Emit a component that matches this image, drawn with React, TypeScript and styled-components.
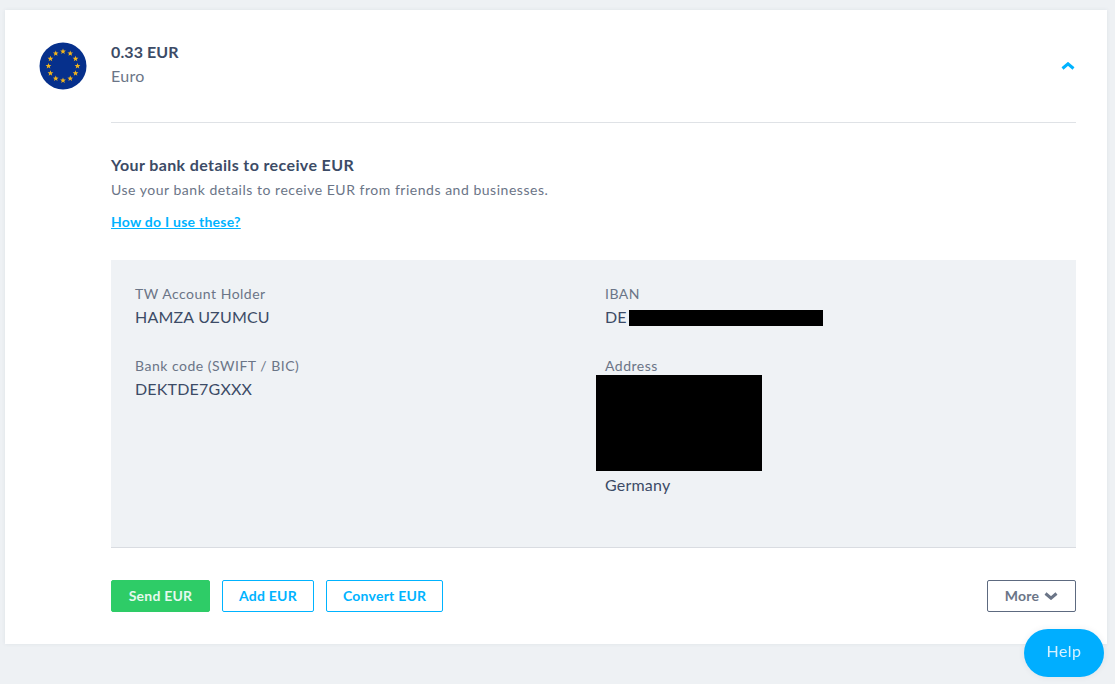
import React from 'react'
import styled, { createGlobalStyle } from 'styled-components'

const GlobalStyle = createGlobalStyle`
  html, body {
    margin: 0;
    height: 100%;
    background: #eef1f4;
    font-family: 'Lato', 'Noto Sans', sans-serif;
    overflow: hidden;
  }
`

const Page = styled.div`
  padding: 10px 8px 0 5px;
`

const Card = styled.section`
  height: 634px;
  box-sizing: border-box;
  background: #fff;
  padding: 32px 31px 0 34px;
  display: grid;
  grid-template-columns: 48px 1fr;
  column-gap: 24px;
  box-shadow: 0 0 4px rgba(40, 60, 90, 0.08);
`

const Body = styled.div`
  display: flex;
  flex-direction: column;
  min-width: 0;
`

const Header = styled.header`
  height: 80px;
  border-bottom: 1px solid #dfe2e6;
  display: flex;
  justify-content: space-between;
  align-items: flex-start;
`

const Balance = styled.div`
  display: flex;
  flex-direction: column;
  gap: 5px;
`

const Amount = styled.div`
  font-size: 16px;
  line-height: 19px;
  font-weight: 700;
  letter-spacing: 0.1px;
  color: #3c4b66;
`

const CurrencyName = styled.div`
  font-size: 16px;
  line-height: 19px;
  letter-spacing: 0.3px;
  color: #6b7587;
`

const ChevronIcon = styled.svg<{ $up?: boolean }>`
  display: block;
  margin: ${p => (p.$up ? '20px 1px 0 0' : '0')};
`

const Intro = styled.div`
  padding-top: 32px;
  height: 137px;
  box-sizing: border-box;
`

const Title = styled.h2`
  margin: 0;
  font-size: 16px;
  line-height: 20px;
  font-weight: 700;
  letter-spacing: 0.38px;
  color: #3c4b66;
`

const Lead = styled.p`
  margin: 6px 0 0;
  font-size: 14px;
  line-height: 17px;
  letter-spacing: 0.52px;
  color: #6b7587;
`

const HelpLink = styled.a`
  display: block;
  margin-top: 15px;
  font-size: 14px;
  line-height: 17px;
  font-weight: 700;
  letter-spacing: 0.25px;
  color: #00b3ff;
  text-decoration: underline;
`

const Details = styled.div`
  height: 288px;
  box-sizing: border-box;
  background: #eff2f5;
  border-bottom: 1px solid #d9dce1;
  padding: 25px 24px 0;
  display: grid;
  grid-template-columns: 470px 1fr;
`

const DetailColumn = styled.div`
  display: flex;
  flex-direction: column;
  gap: 28px;
`

const Field = styled.div`
  position: relative;
  display: flex;
  flex-direction: column;
  gap: 2px;
`

const Label = styled.div`
  font-size: 14px;
  line-height: 18px;
  letter-spacing: 0.5px;
  color: #6b7587;
`

const Value = styled.div`
  font-size: 16px;
  line-height: 24px;
  letter-spacing: 0.2px;
  color: #3c4b66;
`

const AddressGap = styled.div`
  height: 94px;
`

const Redaction = styled.div<{ $left: number; $top: number; $width: number; $height: number }>`
  position: absolute;
  left: ${p => p.$left}px;
  top: ${p => p.$top}px;
  width: ${p => p.$width}px;
  height: ${p => p.$height}px;
  background: #000;
`

const Actions = styled.div`
  display: flex;
  gap: 12px;
  padding-top: 32px;
`

const Button = styled.button<{ $kind: 'send' | 'outline' | 'more' }>`
  height: 32px;
  box-sizing: border-box;
  border-radius: 2px;
  font-family: inherit;
  font-size: 14px;
  font-weight: 700;
  letter-spacing: 0.22px;
  display: flex;
  align-items: center;
  justify-content: center;
  gap: 5px;
  padding: 0 16px 1px;
  min-width: ${p => (p.$kind === 'send' ? '99px' : p.$kind === 'more' ? '89px' : '92px')};
  background: ${p => (p.$kind === 'send' ? '#2ecc67' : '#fff')};
  color: ${p => (p.$kind === 'send' ? '#e6f9ee' : p.$kind === 'more' ? '#6b7587' : '#00b3ff')};
  border: 1px solid ${p => (p.$kind === 'send' ? '#2ecc67' : p.$kind === 'more' ? '#5d6a80' : '#00b3ff')};
  margin-left: ${p => (p.$kind === 'more' ? 'auto' : '0')};
`

const HelpButton = styled.button`
  position: fixed;
  left: 1024px;
  top: 629px;
  width: 80px;
  height: 48px;
  border: 0;
  border-radius: 24px;
  padding: 0 0 6px;
  background: #00aeff;
  color: #d5f1ff;
  font-family: inherit;
  font-size: 16px;
  letter-spacing: 0.4px;
  box-shadow: 0 0 6px rgba(40, 60, 90, 0.08);
`

const FlagIcon = styled.svg`
  display: block;
`

function Chevron({ up, color }: { up?: boolean; color: string }) {
  return (
    <ChevronIcon $up={up} width="14" height="8" viewBox="0 0 14 8">
      <polyline
        points={up ? '1.5,6.5 7,1.8 12.5,6.5' : '1.5,1.5 7,6.2 12.5,1.5'}
        fill="none"
        stroke={color}
        strokeWidth="3"
      />
    </ChevronIcon>
  )
}

function EuFlag() {
  const stars = Array.from({ length: 12 }, (_, i) => {
    const a = (i * Math.PI) / 6
    const cx = 24 + 14.5 * Math.sin(a)
    const cy = 24 - 14.5 * Math.cos(a)
    const pts = Array.from({ length: 10 }, (_, j) => {
      const r = j % 2 === 0 ? 3 : 1.3
      const t = (j * Math.PI) / 5
      return `${(cx + r * Math.sin(t)).toFixed(2)},${(cy - r * Math.cos(t)).toFixed(2)}`
    }).join(' ')
    return <polygon key={i} points={pts} fill="#f2b51d" />
  })
  return (
    <FlagIcon width="48" height="48" viewBox="0 0 48 48">
      <circle cx="24" cy="24" r="23.5" fill="#06308c" />
      {stars}
    </FlagIcon>
  )
}

export default function App() {
  return (
    <Page>
      <GlobalStyle />
      <Card>
        <EuFlag />
        <Body>
          <Header>
            <Balance>
              <Amount>0.33 EUR</Amount>
              <CurrencyName>Euro</CurrencyName>
            </Balance>
            <Chevron up color="#00b3ff" />
          </Header>
          <Intro>
            <Title>Your bank details to receive EUR</Title>
            <Lead>Use your bank details to receive EUR from friends and businesses.</Lead>
            <HelpLink href="#">How do I use these?</HelpLink>
          </Intro>
          <Details>
            <DetailColumn>
              <Field>
                <Label>TW Account Holder</Label>
                <Value>HAMZA UZUMCU</Value>
              </Field>
              <Field>
                <Label>Bank code (SWIFT / BIC)</Label>
                <Value>DEKTDE7GXXX</Value>
              </Field>
            </DetailColumn>
            <DetailColumn>
              <Field>
                <Label>IBAN</Label>
                <Value>DE</Value>
                <Redaction $left={24} $top={25} $width={194} $height={16} />
              </Field>
              <Field>
                <Label>Address</Label>
                <AddressGap />
                <Value>Germany</Value>
                <Redaction $left={-9} $top={18} $width={166} $height={96} />
              </Field>
            </DetailColumn>
          </Details>
          <Actions>
            <Button $kind="send">Send EUR</Button>
            <Button $kind="outline">Add EUR</Button>
            <Button $kind="outline">Convert EUR</Button>
            <Button $kind="more">
              More <Chevron color="#6b7587" />
            </Button>
          </Actions>
        </Body>
      </Card>
      <HelpButton>Help</HelpButton>
    </Page>
  )
}
